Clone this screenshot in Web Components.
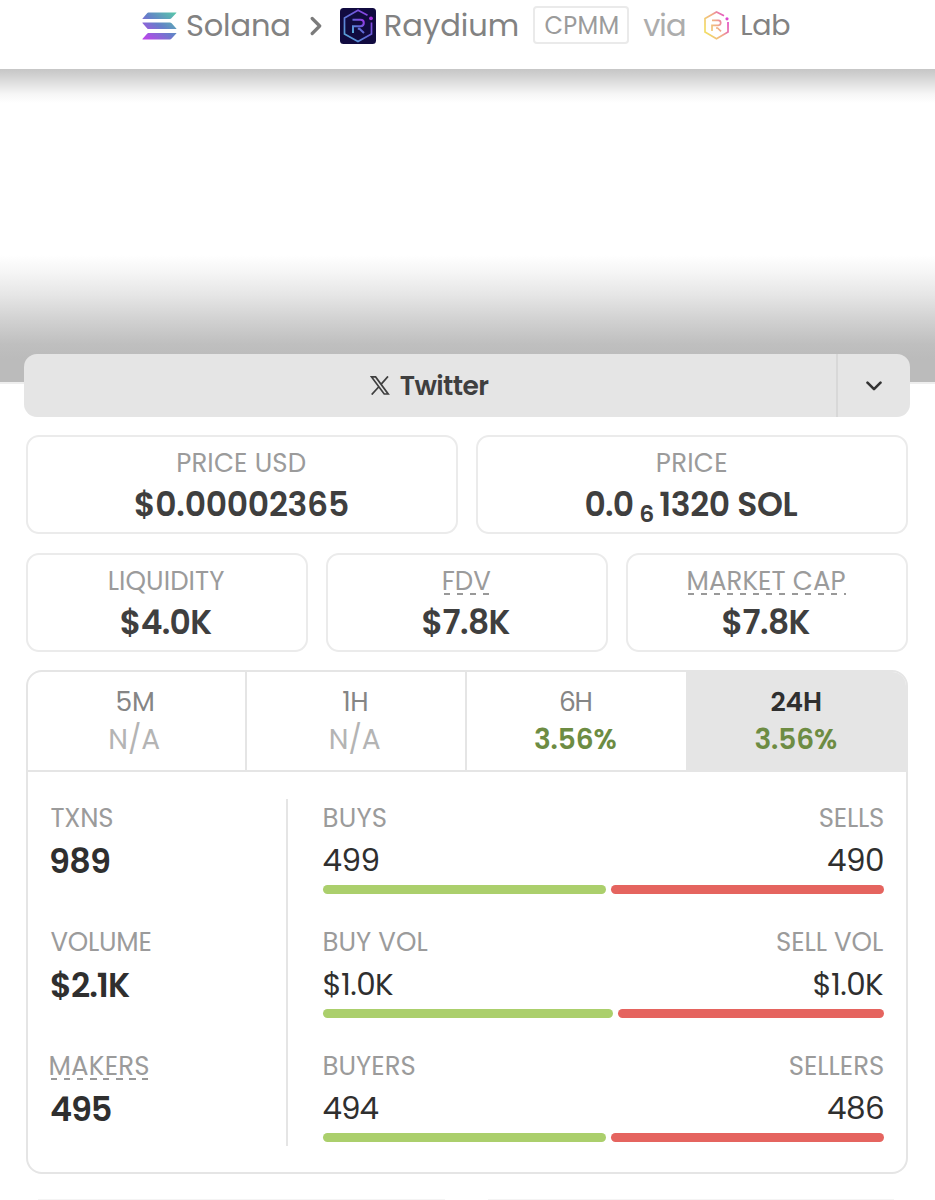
<!DOCTYPE html>
<html lang="en">
<head>
<meta charset="utf-8">
<title>Pair details</title>
<style>
  body {
    margin: 0;
    background: #fff;
    font-family: Poppins, Inter, "Liberation Sans", sans-serif;
    overflow: hidden;
  }
</style>
</head>
<body>
<pair-page></pair-page>

<script>
const canvas = document.createElement("canvas").getContext("2d");

// Text tracked so that its ink spans exactly `w` pixels.
class FitText extends HTMLElement {
  constructor() {
    super();
    this.attachShadow({ mode: "open" });
    this.shadowRoot.innerHTML = `<style>
        :host { display: inline-block; white-space: nowrap; }
        span { display: block; }
      </style><span><slot></slot></span>`;
  }

  connectedCallback() {
    const text = this.textContent;
    const width = Number(this.getAttribute("w"));
    const span = this.shadowRoot.querySelector("span");
    canvas.font = getComputedStyle(this).font;
    const m = canvas.measureText(text);
    const ink = m.actualBoundingBoxLeft + m.actualBoundingBoxRight;
    const spacing = text.length > 1 ? (width - ink) / (text.length - 1) : 0;
    span.style.letterSpacing = `${spacing}px`;
    span.style.marginLeft = `${m.actualBoundingBoxLeft}px`;
    span.style.marginRight = `${m.actualBoundingBoxRight - m.width - spacing}px`;
  }
}

class ChainBar extends HTMLElement {
  constructor() {
    super();
    this.attachShadow({ mode: "open" });
  }

  connectedCallback() {
    this.shadowRoot.innerHTML = `
      <style>
        :host {
          display: flex;
          align-items: center;
          box-sizing: border-box;
          height: 69px;
          padding: 0 0 18px 142px;
          color: #828282;
          font-size: 30.5px;
          font-weight: 400;
          line-height: 41px;
        }
        svg { display: block; flex: none; }
        .solana { margin-right: 10px; }
        .arrow { margin: 0 18px 0 20.5px; }
        .raydium { margin-right: 10px; }
        .badge {
          display: flex;
          justify-content: center;
          box-sizing: border-box;
          width: 96px;
          height: 38px;
          margin: 0 13.8px 2px 15.6px;
          border: 2px solid #eaeaea;
          border-radius: 4px;
          color: #9b9b9b;
          font-size: 24px;
          line-height: 35px;
        }
        .via { color: #adadad; margin-right: 19px; }
        .lab { margin-right: 13.2px; }
        .name { font-size: 28.5px; margin-bottom: 1px; }
      </style>
      <svg class="solana" width="35" height="28" viewBox="0 0 35 28">
        <defs>
          <linearGradient id="s" gradientUnits="userSpaceOnUse" x1="31" y1="0" x2="8" y2="30">
            <stop offset="0" stop-color="#58c4ab"/>
            <stop offset=".5" stop-color="#657fc9"/>
            <stop offset="1" stop-color="#b947ea"/>
          </linearGradient>
        </defs>
        <path fill="url(#s)" d="M6.3 .5H34.2Q34.8 .5 34.3 1.1L29.4 6.3Q28.8 7 28 7H.8Q0 7 .6 6.4L5.3 1.1Q5.8 .5 6.3 .5ZM.8 10.5H28Q28.8 10.5 29.4 11.1L34.3 16.4Q34.8 17 34.2 17H6.3Q5.7 17 5.2 16.4L.6 11.2Q0 10.5 .8 10.5ZM6.3 21H34.2Q34.8 21 34.3 21.6L29.4 26.8Q28.8 27.5 28 27.5H.8Q0 27.5 .6 26.8L5.3 21.6Q5.8 21 6.3 21Z"/>
      </svg>
      <fit-text w="102.3">Solana</fit-text>
      <svg class="arrow" width="12" height="20" viewBox="0 0 12 20">
        <path d="M2.2 2.5L9.7 10L2.2 17.5" fill="none" stroke="#7b7b7b" stroke-width="3.2" stroke-linecap="round" stroke-linejoin="round"/>
      </svg>
      <svg class="raydium" width="36" height="36" viewBox="0 0 36 36">
        <defs>
          <linearGradient id="r" x1="1" y1="0" x2="0" y2="1">
            <stop offset="0" stop-color="#9b35e8"/>
            <stop offset=".5" stop-color="#5f68d6"/>
            <stop offset="1" stop-color="#55b0d8"/>
          </linearGradient>
        </defs>
        <rect width="36" height="36" rx="3.5" fill="#110b40"/>
        <g fill="none" stroke="url(#r)" stroke-width="1.7">
          <path d="M27.5 7.3L18 2.3L4.5 10V26L18 33.5L31.5 26V14.5"/>
          <path stroke-width="2" d="M13 25V18.3H20.5Q23.8 18 23.8 15Q23.8 11.8 20.5 11.8H12.5M17.8 20.8H19.5L24 25"/>
        </g>
        <circle cx="31" cy="10.3" r="1.9" fill="#a42edd"/>
      </svg>
      <fit-text w="132">Raydium</fit-text>
      <span class="badge"><fit-text w="72">CPMM</fit-text></span>
      <fit-text class="via" w="41.7">via</fit-text>
      <svg class="lab" width="25" height="29" viewBox="0 0 25 29">
        <defs>
          <linearGradient id="l" gradientUnits="userSpaceOnUse" x1="2" y1="20" x2="24" y2="10">
            <stop offset="0" stop-color="#f2dc67"/>
            <stop offset=".55" stop-color="#f0a98b"/>
            <stop offset="1" stop-color="#e34bc4"/>
          </linearGradient>
        </defs>
        <g fill="none" stroke="url(#l)" stroke-width="1.7">
          <path d="M20 4.8L12.5 1L1 7.5V21L12.5 27.8L24 21V11"/>
          <path d="M8 20V14.3H14.3Q16.7 14.1 16.7 11.8Q16.7 9.3 14.3 9.3H8M12 17H13.5L17 20.3"/>
        </g>
        <circle cx="23" cy="7.8" r="1.6" fill="#df48cf"/>
      </svg>
      <fit-text class="name" w="48">Lab</fit-text>`;
  }
}

class SocialButton extends HTMLElement {
  constructor() {
    super();
    this.attachShadow({ mode: "open" });
  }

  connectedCallback() {
    this.shadowRoot.innerHTML = `
      <style>
        :host {
          display: flex;
          height: 63px;
          border-radius: 13px;
          background: #e5e5e5;
          color: #3f3f3f;
          font-size: 26.5px;
          font-weight: 600;
          line-height: 36px;
        }
        .main {
          display: flex;
          flex: 1;
          align-items: center;
          justify-content: center;
          gap: 10px;
          padding-right: 1px;
        }
        .more {
          display: grid;
          place-items: center;
          width: 72px;
          border-left: 2px solid #d8d8d8;
        }
        svg { display: block; }
      </style>
      <div class="main">
        <svg width="20" height="19" viewBox="0 0 20 19" fill="none" stroke="#3f3f3f" stroke-width="1.7">
          <path d="M1.6 .9H5.6L18.2 18H14.2ZM18 .4L11 8.4M8.6 11L1.7 18.6"/>
        </svg>
        <fit-text w="89.7">Twitter</fit-text>
      </div>
      <div class="more">
        <svg width="16" height="10" viewBox="0 0 16 10">
          <path d="M1.5 1.7L8 8.2L14.5 1.7" fill="none" stroke="#333" stroke-width="2.6" stroke-linecap="round" stroke-linejoin="round"/>
        </svg>
      </div>`;
  }
}

// Grey caption; `hint` adds the dashed rule of a tooltip trigger.
class StatLabel extends HTMLElement {
  constructor() {
    super();
    this.attachShadow({ mode: "open" });
  }

  connectedCallback() {
    this.shadowRoot.innerHTML = `
      <style>
        :host {
          display: block;
          height: 36px;
          color: #9b9b9b;
          font-size: 26px;
          font-weight: 400;
          line-height: 38px;
        }
        div { display: inline-block; height: 33px; }
        :host([hint]) div {
          background: repeating-linear-gradient(90deg, #999 0 6.5px, transparent 6.5px 13px) 0 100% / 100% 2px no-repeat;
        }
      </style>
      <div><fit-text w="${this.getAttribute("w")}">${this.textContent}</fit-text></div>`;
  }
}

class StatCard extends HTMLElement {
  constructor() {
    super();
    this.attachShadow({ mode: "open" });
    this.shadowRoot.innerHTML = `
      <style>
        :host {
          display: block;
          flex: 1;
          box-sizing: border-box;
          height: 99px;
          padding-top: 7px;
          border: 2px solid #ebebeb;
          border-radius: 13px;
          text-align: center;
        }
        .value {
          display: flex;
          justify-content: center;
          padding-right: 1px;
          color: #3f3f3f;
          font-size: 33px;
          font-weight: 600;
          line-height: 49px;
        }
      </style>
      <slot name="label"></slot>
      <div class="value"><slot></slot></div>`;
  }
}

class TimeTab extends HTMLElement {
  constructor() {
    super();
    this.attachShadow({ mode: "open" });
    this.shadowRoot.innerHTML = `
      <style>
        :host {
          display: flex;
          flex: 1;
          flex-direction: column;
          align-items: center;
          box-sizing: border-box;
          padding: 10.5px 1px 0 0;
          border-right: 2px solid #e5e5e5;
          color: #858585;
          font-size: 26.5px;
          font-weight: 400;
          line-height: 38px;
        }
        :host([active]) { background: #e5e5e5; border-right: 0; }
      </style>
      <slot></slot>`;
  }
}

class TradeRow extends HTMLElement {
  constructor() {
    super();
    this.attachShadow({ mode: "open" });
  }

  connectedCallback() {
    this.shadowRoot.innerHTML = `
      <style>
        :host { display: block; height: 124px; }
        .line { display: flex; justify-content: space-between; }
        .values {
          height: 50px;
          padding: 0 1px 0 .5px;
          color: #2f2f2f;
          font-size: 31px;
          font-weight: 400;
          line-height: 50px;
        }
        .labels { padding: 0 1px 0 1.5px; }
        .bar { display: flex; gap: 5px; height: 9px; }
        i { border-radius: 5px; background: #e5645f; flex: 1; }
        i:first-child { flex: none; background: #abcf6c; width: ${this.getAttribute("buy")}px; }
      </style>
      <div class="line labels"><slot name="labels-a"></slot><slot name="labels-b"></slot></div>
      <div class="line values">
        <fit-text w="${this.getAttribute("w")}">${this.getAttribute("a")}</fit-text>
        <fit-text w="${this.getAttribute("w")}">${this.getAttribute("b")}</fit-text>
      </div>
      <div class="bar"><i></i><i></i></div>`;
  }
}

class StatsPanel extends HTMLElement {
  constructor() {
    super();
    this.attachShadow({ mode: "open" });
  }

  connectedCallback() {
    this.shadowRoot.innerHTML = `
      <style>
        :host {
          display: block;
          box-sizing: border-box;
          height: 504px;
          border: 2px solid #e5e5e5;
          border-radius: 16px;
          overflow: hidden;
        }
        .tabs { display: flex; height: 98px; margin-left: -2px; border-bottom: 2px solid #e5e5e5; }
        .na { color: #b4b4b4; font-size: 28px; }
        .up { color: #6d8c43; font-size: 28px; font-weight: 600; }
        .on { color: #2f2f2f; font-weight: 600; }
        .body { display: flex; padding: 27px 22px 0 22.5px; }
        .totals {
          box-sizing: border-box;
          width: 237px;
          height: 347px;
          border-right: 2px solid #e5e5e5;
        }
        .total { height: 124px; }
        .total > fit-text {
          display: block;
          padding-left: .5px;
          color: #2f2f2f;
          font-size: 33.5px;
          font-weight: 600;
          line-height: 53px;
        }
        .trades { flex: 1; padding-left: 35.5px; }
      </style>
      <div class="tabs">
        <time-tab><fit-text w="36.7">5M</fit-text><fit-text class="na" w="49">N/A</fit-text></time-tab>
        <time-tab><fit-text w="24">1H</fit-text><fit-text class="na" w="49">N/A</fit-text></time-tab>
        <time-tab><fit-text w="31.3">6H</fit-text><fit-text class="up" w="81.7">3.56%</fit-text></time-tab>
        <time-tab active><fit-text class="on" w="49.3">24H</fit-text><fit-text class="up" w="81.7">3.56%</fit-text></time-tab>
      </div>
      <div class="body">
        <div class="totals">
          <div class="total"><stat-label w="61.7">TXNS</stat-label><fit-text w="59">989</fit-text></div>
          <div class="total"><stat-label w="100">VOLUME</stat-label><fit-text w="79">$2.1K</fit-text></div>
          <div class="total"><stat-label hint w="97.7">MAKERS</stat-label><fit-text w="59.7">495</fit-text></div>
        </div>
        <div class="trades">
          <trade-row buy="283" a="499" b="490" w="55">
            <stat-label slot="labels-a" w="61.3">BUYS</stat-label>
            <stat-label slot="labels-b" w="63.3">SELLS</stat-label>
          </trade-row>
          <trade-row buy="289.5" a="$1.0K" b="$1.0K" w="69.5">
            <stat-label slot="labels-a" w="103">BUY VOL</stat-label>
            <stat-label slot="labels-b" w="106">SELL VOL</stat-label>
          </trade-row>
          <trade-row buy="283" a="494" b="486" w="55">
            <stat-label slot="labels-a" w="90">BUYERS</stat-label>
            <stat-label slot="labels-b" w="93.3">SELLERS</stat-label>
          </trade-row>
        </div>
      </div>`;
  }
}

class PairPage extends HTMLElement {
  constructor() {
    super();
    this.attachShadow({ mode: "open" });
  }

  connectedCallback() {
    this.shadowRoot.innerHTML = `
      <style>
        :host { display: block; width: 935px; height: 1200px; overflow: hidden; }
        .hero {
          box-sizing: border-box;
          height: 315px;
          border-bottom: 2px solid #eee;
          background:
            linear-gradient(#c6c6c6, #d0d0d0 6px, #e4e4e4 16px, #f6f6f6 25px, transparent 34px),
            linear-gradient(transparent 186px, #f5f5f5 204px, #e6e6e6 226px, #d2d2d2 250px, #bfbfbf 275px, #bbb 290px, #bbb);
        }
        social-button { margin: -30px 25px 18px 24px; }
        main { display: flex; flex-direction: column; padding: 0 27px 0 26px; }
        .row { display: flex; gap: 18px; margin-bottom: 19px; }
        .row.last { margin-bottom: 18px; }
        .sub { font-size: 23.5px; font-weight: 600; margin: 10px 7px 0 7.5px; line-height: 47px; height: 36px; }
        .next { display: flex; gap: 43px; padding: 25px 14px 0 12px; }
        .next i { flex: 1; height: 1px; background: #f4f4f4; }
      </style>
      <chain-bar></chain-bar>
      <div class="hero"></div>
      <social-button></social-button>
      <main>
        <div class="row">
          <stat-card>
            <stat-label slot="label" w="127.5">PRICE USD</stat-label>
            <fit-text w="213">$0.00002365</fit-text>
          </stat-card>
          <stat-card>
            <stat-label slot="label" w="68.3">PRICE</stat-label>
            <fit-text w="47.3">0.0</fit-text><fit-text class="sub" w="12.5">6</fit-text><fit-text w="137.4">1320 SOL</fit-text>
          </stat-card>
        </div>
        <div class="row last">
          <stat-card>
            <stat-label slot="label" w="114.3">LIQUIDITY</stat-label>
            <fit-text w="91.3">$4.0K</fit-text>
          </stat-card>
          <stat-card>
            <stat-label slot="label" hint w="46.7">FDV</stat-label>
            <fit-text w="88">$7.8K</fit-text>
          </stat-card>
          <stat-card>
            <stat-label slot="label" hint w="157">MARKET CAP</stat-label>
            <fit-text w="88">$7.8K</fit-text>
          </stat-card>
        </div>
        <stats-panel></stats-panel>
        <div class="next"><i></i><i></i></div>
      </main>`;
  }
}

window.customElements.define("fit-text", FitText);
window.customElements.define("stat-label", StatLabel);
window.customElements.define("stat-card", StatCard);
window.customElements.define("time-tab", TimeTab);
window.customElements.define("trade-row", TradeRow);
window.customElements.define("stats-panel", StatsPanel);
window.customElements.define("social-button", SocialButton);
window.customElements.define("chain-bar", ChainBar);
window.customElements.define("pair-page", PairPage);
</script>
</body>
</html>
